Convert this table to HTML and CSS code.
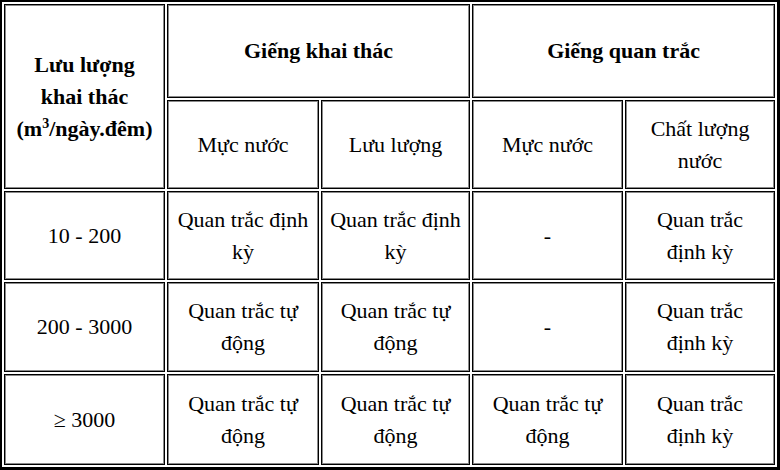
FILE: index.html
```html
<!DOCTYPE html>
<html lang="vi">
<head>
<meta charset="utf-8">
<title>Quan trắc</title>
<link rel="stylesheet" href="styles.css">
</head>
<body>
<table class="grid">
  <colgroup>
    <col class="c1"><col class="c2"><col class="c3"><col class="c4"><col class="c5">
  </colgroup>
  <tr class="r1">
    <th rowspan="2">Lưu lượng<br>khai thác<br>(m<sup>3</sup>/ngày.đêm)</th>
    <th colspan="2">Giếng khai thác</th>
    <th colspan="2">Giếng quan trắc</th>
  </tr>
  <tr class="r2">
    <td>Mực nước</td>
    <td>Lưu lượng</td>
    <td>Mực nước</td>
    <td>Chất lượng<br>nước</td>
  </tr>
  <tr class="r3">
    <td>10 - 200</td>
    <td>Quan trắc định<br>kỳ</td>
    <td>Quan trắc định<br>kỳ</td>
    <td>-</td>
    <td>Quan trắc<br>định kỳ</td>
  </tr>
  <tr class="r4">
    <td>200 - 3000</td>
    <td>Quan trắc tự<br>động</td>
    <td>Quan trắc tự<br>động</td>
    <td>-</td>
    <td>Quan trắc<br>định kỳ</td>
  </tr>
  <tr class="r5">
    <td>≥ 3000</td>
    <td>Quan trắc tự<br>động</td>
    <td>Quan trắc tự<br>động</td>
    <td>Quan trắc tự<br>động</td>
    <td>Quan trắc<br>định kỳ</td>
  </tr>
</table>
</body>
</html>
```

FILE: styles.css
```css
html, body {
  margin: 0;
  padding: 0;
  background: #fff;
}

.grid {
  table-layout: fixed;
  border-collapse: separate;
  border-spacing: 2px;
  border-style: solid;
  border-color: #000;
  border-width: 2px 3px 3px 2px;
  width: 780px;
  font-family: "Liberation Serif", "Times New Roman", serif;
  font-size: 22px;
  line-height: 32px;
  color: #000;
}

.c1 { width: 161px; }
.c2 { width: 152px; }
.c3 { width: 149px; }
.c4 { width: 151px; }
.c5 { width: 150px; }

.grid th,
.grid td {
  border: 1px solid #000;
  box-shadow: inset 0 0 0 1px #8a8a8a;
  padding: 0 3px;
  text-align: center;
  vertical-align: middle;
  box-sizing: border-box;
}

.grid th {
  font-weight: bold;
}

.grid sup {
  font-size: 14px;
  line-height: 0;
  vertical-align: 8px;
}

.r1 { height: 94px; }
.r2 { height: 89px; }
.r3 { height: 89px; }
.r4 { height: 90px; }
.r5 { height: 91px; }
```
